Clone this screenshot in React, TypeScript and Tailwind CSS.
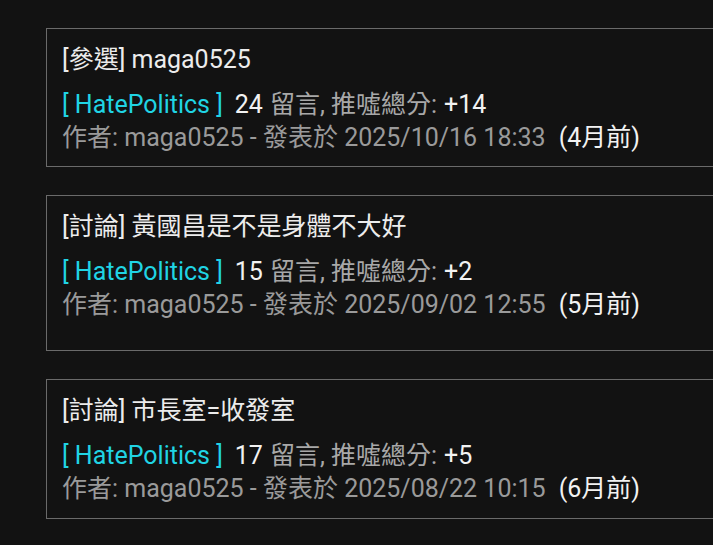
import React from "react";

const posts = [
  { title: "[參選] maga0525", count: "24", score: "+14", date: "2025/10/16 18:33", ago: "(4月前)", pb: "pb-[12px]" },
  { title: "[討論] 黃國昌是不是身體不大好", count: "15", score: "+2", date: "2025/09/02 12:55", ago: "(5月前)", pb: "pb-[29px]" },
  { title: "[討論] 市長室=收發室", count: "17", score: "+5", date: "2025/08/22 10:15", ago: "(6月前)", pb: "pb-[13px]" },
];

export default function App() {
  return (
    <div
      className="w-[713px] h-[545px] overflow-hidden bg-[#121212] pt-[28px] pl-[46px]"
      style={{ fontFamily: 'Roboto, "Noto Sans CJK TC", sans-serif' }}
    >
      <div className="flex flex-col gap-[28px] w-[720px]">
        {posts.map((p, i) => (
          <div
            key={i}
            className={`border border-[#6a6a6a] pl-[15px] pt-[14px] ${p.pb} text-[25px] leading-[33px]`}
          >
            <div className="text-[#ececec] mb-[12px]">{p.title}</div>
            <div className="flex">
              <span className="text-[#20d4e4]">[ HatePolitics ]</span>
              <span className="text-[#f2f2f2] ml-[12px]">{p.count}</span>
              <span className="text-[#a8a8a8] ml-[7px]">留言, 推噓總分:</span>
              <span className="text-[#f2f2f2] ml-[7px]">{p.score}</span>
            </div>
            <div className="flex">
              <span className="text-[#9a9a9a]">作者: maga0525 - 發表於 {p.date}</span>
              <span className="text-[#f2f2f2] ml-[13px]">{p.ago}</span>
            </div>
          </div>
        ))}
      </div>
    </div>
  );
}
